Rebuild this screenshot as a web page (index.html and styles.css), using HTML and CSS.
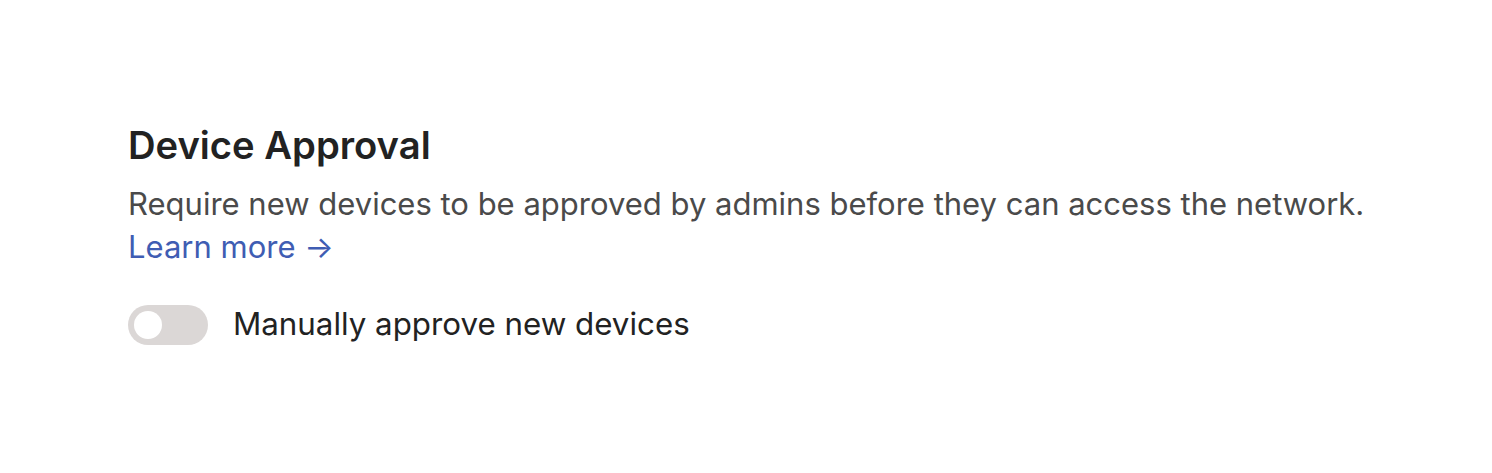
FILE: index.html
```html
<!DOCTYPE html>
<html lang="en">
<head>
<meta charset="utf-8">
<title>Device Approval</title>
<link rel="stylesheet" href="styles.css">
</head>
<body>
<section class="setting">
  <h2 class="title">Device Approval</h2>
  <p class="desc">Require new devices to be approved by admins before they can access the network.<br><a class="link" href="#">Learn more →</a></p>
  <label class="row">
    <span class="toggle"><span class="knob"></span></span>
    <span class="label">Manually approve new devices</span>
  </label>
</section>
</body>
</html>
```
FILE: styles.css
```css
html, body {
  margin: 0;
  padding: 0;
  background: #ffffff;
}
body {
  font-family: "Inter", "Noto Sans", sans-serif;
  color: #222222;
}
.setting {
  padding: 118px 0 0 128px;
}
.title {
  margin: 0;
  font-size: 38.2px;
  line-height: 54px;
  font-weight: 600;
  color: #222222;
}
.desc {
  margin: 10px 0 0;
  font-size: 31px;
  line-height: 43px;
  color: #4a4a4a;
}
.link {
  color: #3f5db3;
  text-decoration: none;
}
.row {
  display: flex;
  align-items: center;
  gap: 25px;
  margin-top: 35px;
}
.toggle {
  display: flex;
  align-items: center;
  width: 80px;
  height: 40px;
  box-sizing: border-box;
  padding: 0 6px;
  border-radius: 20px;
  background: #dbd7d6;
}
.knob {
  width: 28px;
  height: 28px;
  border-radius: 50%;
  background: #ffffff;
}
.label {
  font-size: 31.3px;
  line-height: 43px;
  color: #222222;
}
```
